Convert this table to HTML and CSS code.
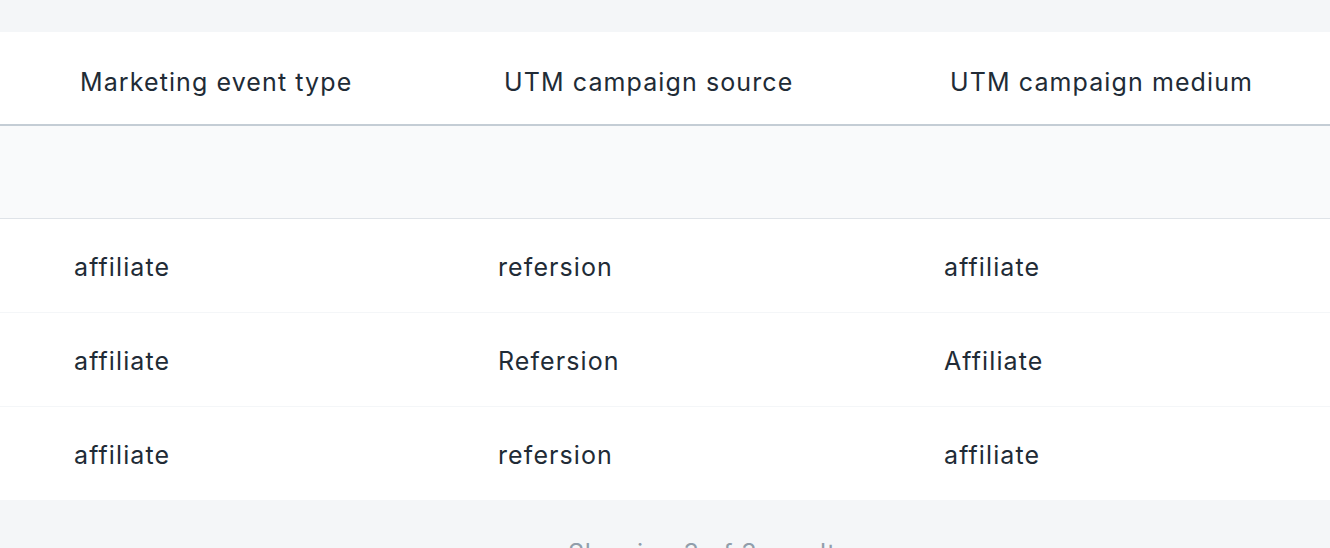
FILE: index.html
```html
<!DOCTYPE html>
<html lang="en">
<head>
<meta charset="utf-8">
<link rel="stylesheet" href="styles.css">
</head>
<body>
<div class="page">
  <div class="card">
    <div class="tr head-row">
      <div class="cell">Marketing event type</div>
      <div class="cell">UTM campaign source</div>
      <div class="cell">UTM campaign medium</div>
    </div>
    <div class="tr totals-row">
      <div class="cell"></div>
      <div class="cell"></div>
      <div class="cell"></div>
    </div>
    <div class="tr row">
      <div class="cell">affiliate</div>
      <div class="cell">refersion</div>
      <div class="cell">affiliate</div>
    </div>
    <div class="tr row">
      <div class="cell">affiliate</div>
      <div class="cell">Refersion</div>
      <div class="cell">Affiliate</div>
    </div>
    <div class="tr row last">
      <div class="cell">affiliate</div>
      <div class="cell">refersion</div>
      <div class="cell">affiliate</div>
    </div>
  </div>
  <div class="footer">Showing 3 of 3 results</div>
</div>
</body>
</html>
```

FILE: styles.css
```css
html, body {
  margin: 0;
  padding: 0;
  background: #f4f6f8;
}
body {
  font-family: Inter, "Noto Sans", sans-serif;
  color: #212b36;
  font-size: 25px;
  letter-spacing: 1.1px;
  overflow: hidden;
}
.page {
  padding-top: 32px;
}
.card {
  background: #ffffff;
}
.tr {
  display: grid;
  grid-template-columns: 424px 446px 1fr;
  align-items: center;
  padding-left: 74px;
  box-sizing: border-box;
}
.cell {
  white-space: nowrap;
  line-height: 36px;
  padding-top: 3px;
}
.head-row {
  height: 94px;
  padding-left: 80px;
  border-bottom: 2px solid #c4cdd5;
}
.head-row .cell {
  padding-top: 8px;
}
.totals-row {
  height: 93px;
  background: #f9fafb;
  border-bottom: 1px solid #dfe3e8;
}
.row {
  height: 94px;
  border-bottom: 1px solid #f4f6f8;
}
.row.last {
  height: 93px;
  border-bottom: none;
}
.footer {
  padding: 35px 0 0 568px;
  line-height: 36px;
  color: #919eab;
  letter-spacing: 0.8px;
  white-space: nowrap;
}
```
